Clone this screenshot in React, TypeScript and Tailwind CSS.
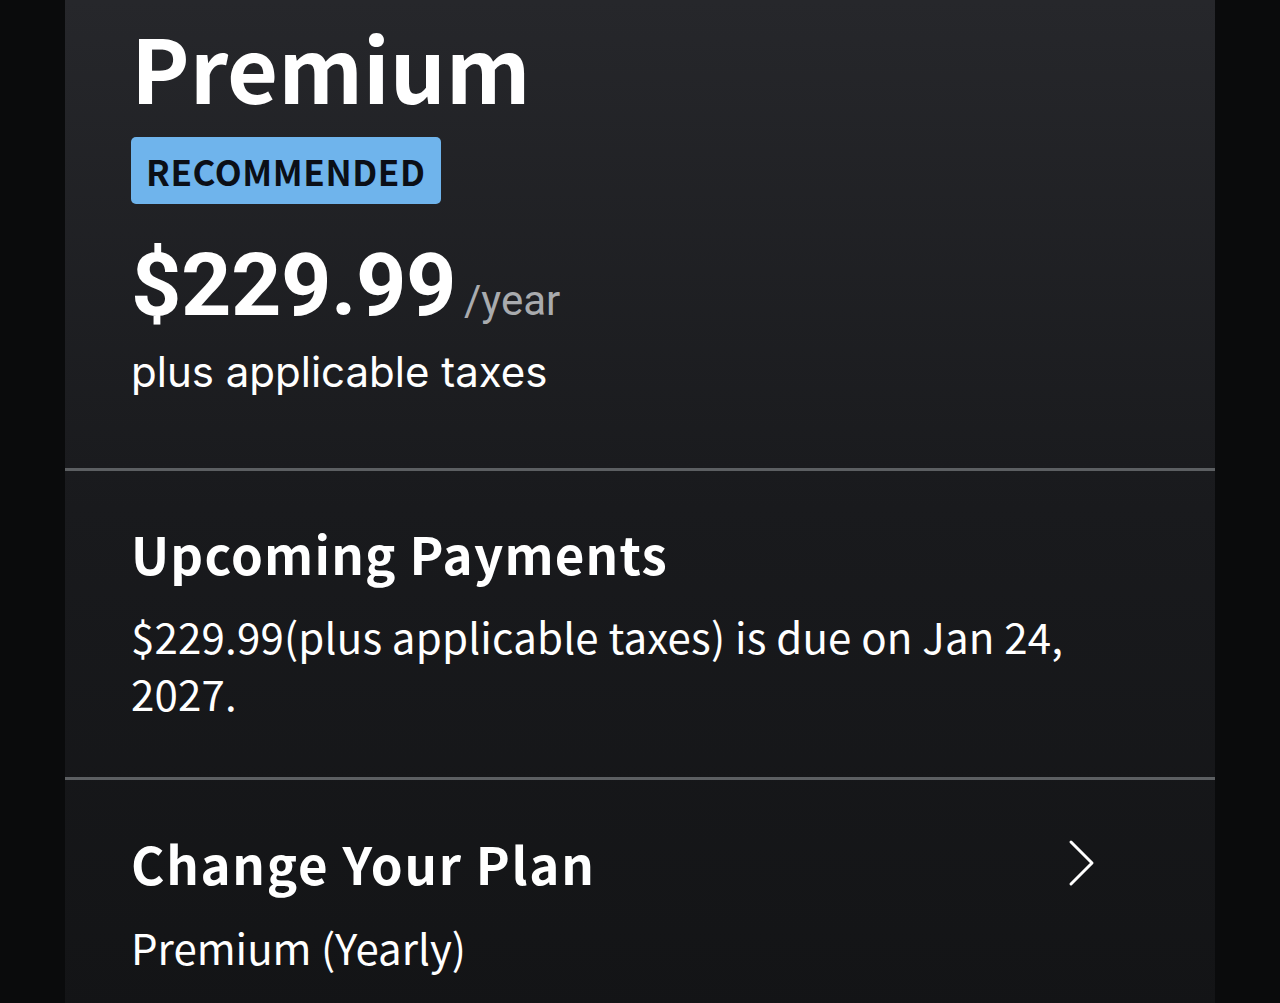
export default function App() {
  const cjk = { fontFamily: '"Noto Sans CJK SC", "Noto Sans", sans-serif' };
  return (
    <div className="flex min-h-[1003px] w-full justify-center bg-[#0a0b0c]" style={cjk}>
      <div className="flex w-[1150px] flex-col bg-gradient-to-b from-[#26272b] via-[#191a1d] to-[#131416] text-white">
        <section className="flex flex-col px-[66px] pb-[70px] pt-[16px]">
          <h1 className="text-[88px] font-bold leading-[100px]">Premium</h1>
          <div className="mt-[21px] self-start rounded-[5px] bg-[#6fb4ec] px-[15px] py-[10px] text-[35px] font-bold leading-[47px] tracking-[0.6px] text-[#0b0f17]">
            RECOMMENDED
          </div>
          <div className="mt-[40px] flex items-baseline gap-[8px] font-['Roboto',sans-serif]">
            <span className="text-[88px] font-bold leading-[82px] tracking-[-0.5px]">$229.99</span>
            <span className="text-[42px] text-[#a9abae]">/year</span>
          </div>
          <p className="mt-[14px] font-['Inter',sans-serif] text-[42px] leading-[52px]">plus applicable taxes</p>
        </section>
        <div className="h-[3px] bg-[#5c5f62]" />
        <section className="flex flex-col px-[66px] pb-[56px] pt-[50px]">
          <h2 className="text-[51px] font-bold leading-[64px] tracking-[1.2px]">Upcoming Payments</h2>
          <p className="mt-[22px] text-[42px] leading-[57px] tracking-[0.2px]">$229.99(plus applicable taxes) is due on Jan 24, 2027.</p>
        </section>
        <div className="h-[3px] bg-[#5c5f62]" />
        <section className="flex flex-col px-[66px] pb-[40px] pt-[51px]">
          <div className="flex items-center justify-between">
            <h2 className="text-[51px] font-bold leading-[64px] tracking-[1.7px]">Change Your Plan</h2>
            <svg width="30" height="48" viewBox="0 0 30 48" fill="none" className="mr-[53px]">
              <path d="M5 3 L26 24 L5 45" stroke="white" strokeWidth="3" strokeLinecap="round" strokeLinejoin="round" />
            </svg>
          </div>
          <p className="mt-[23px] text-[42px] leading-[57px]">Premium (Yearly)</p>
        </section>
      </div>
    </div>
  );
}
